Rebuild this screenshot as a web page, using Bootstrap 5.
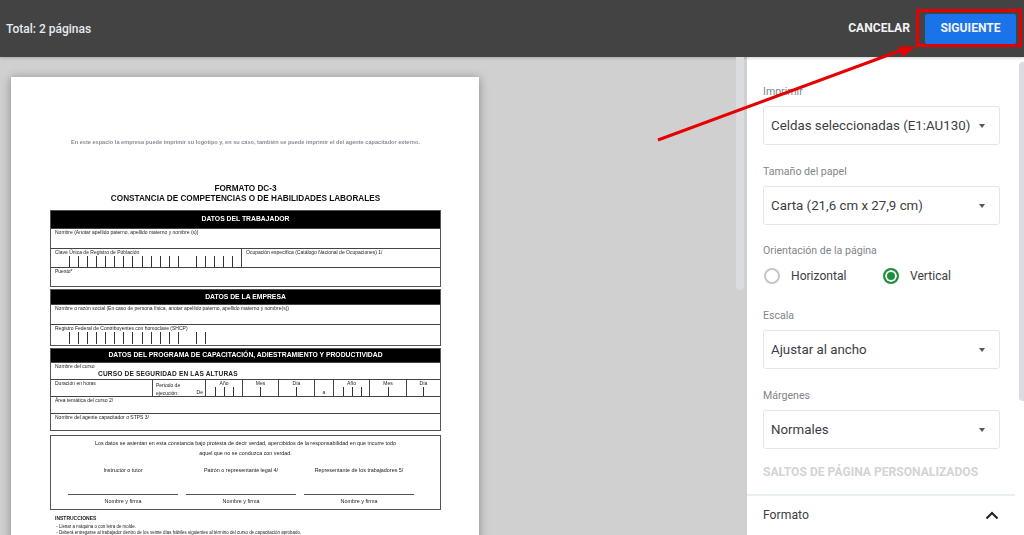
<!DOCTYPE html>
<html lang="es">
<head>
  <meta charset="UTF-8">
  <meta name="viewport" content="width=device-width, initial-scale=1.0">
  <title>Imprimir</title>
  <link href="https://cdn.jsdelivr.net/npm/bootstrap@5.3.0/dist/css/bootstrap.min.css" rel="stylesheet">
  <style>
    html, body { height: 535px; overflow: hidden; }
    body { font-family: Roboto, "Liberation Sans", sans-serif; background: #d0d0d0; position: relative; }
    /* top bar */
    .print-bar { height: 57px; background: #434343; padding: 0 8px 0 6px; box-shadow: 0 1px 3px rgba(0,0,0,.2); position: relative; }
    .print-total { font-size: 12px; font-weight: 500; color: #e8eaed; }
    .btn-cancel { font-size: 12.1px; font-weight: 700; color: #f1f3f4; padding: 0; margin-right: 15px; border: 0; }
    .btn-next { font-size: 12.1px; font-weight: 700; width: 91px; height: 30px; padding: 0; background: #1a73e8; border: 0; border-radius: 2px; color: #f1f3f4; }
    .print-body { height: 478px; }
    /* sheet preview */
    .preview-area { width: 747px; padding: 20px 0 0 11px; }
    .sheet { width: 468px; height: 480px; background: #fff; box-shadow: 0 1px 9px rgba(0,0,0,.35); font-family: "Liberation Sans", Arial, sans-serif; color: #222; padding: 62px 38px 0 39px; overflow: hidden; }
    .sheet-inner { filter: blur(.3px); }
    .logo-note { font-size: 5.6px; font-weight: 700; color: #8b8b9a; text-align: center; height: 45px; line-height: 7px; white-space: nowrap; }
    .doc-title { font-size: 8.2px; font-weight: 700; line-height: 10px; text-align: center; color: #111; height: 26px; white-space: nowrap; }
    .dc-block { border: 1px solid #555; margin-bottom: 2px; }
    .dc-head { background: #000; color: #fff; font-size: 6.8px; font-weight: 700; text-align: center; display: flex; align-items: center; justify-content: center; white-space: nowrap; }
    .dc-row { border-top: 1px solid #444; font-size: 5px; line-height: 6px; overflow: hidden; white-space: nowrap; }
    .dc-cell { padding: 0 4px; }
    .h-13 { height: 13px; } .h-14 { height: 14px; } .h-17 { height: 17px; } .h-18 { height: 18px; }
    .h-19 { height: 19px; } .h-20 { height: 20px; } .h-21 { height: 21px; }
    .tick-run { height: 12px; background: repeating-linear-gradient(90deg, #333 0 1px, transparent 1px 9.07px); }
    .ticks-wrap { margin: 1px 0 0 14px; gap: 9px; }
    .course-name { font-size: 6.6px; font-weight: 700; padding-left: 43px; line-height: 7px; margin-top: 1px; white-space: nowrap; letter-spacing: .15px; }
    .side-rule { border-left: 1px solid #444; }
    .date-ticks { height: 9px; margin-top: 1px; }
    .date-ticks.years { width: 19px; margin-left: 9px; }
    .date-ticks.single { width: 1px; margin-left: auto; margin-right: auto; }
    .sign-box { height: 75px; border: 1px solid #555; font-size: 5.4px; text-align: center; padding-top: 3px; margin-top: 4px; }
    .sign-box p { margin: 0; line-height: 9.5px; white-space: nowrap; }
    .sign-line { border-top: 1px solid #555; width: 110px; margin-top: 20px; padding-top: 2px; }
    .sign-role { width: 110px; white-space: nowrap; }
    .sign-roles { margin-top: 8px; padding: 0 17px; gap: 8px; }
    .sign-lines { padding: 0 17px; gap: 8px; }
    .instr { font-size: 4.45px; line-height: 6.5px; padding: 5px 0 0 5px; }
    .instr div { white-space: nowrap; }
    .instr-title { margin-bottom: 2px; font-size: 5px; }
    /* settings panel */
    .settings { width: 277px; background: #fff; padding: 27px 0 0 16px; color: #3c4043; }
    .opt-label { font-size: 10.6px; line-height: 14px; color: #80868b; padding-top: 1px; margin-bottom: 7px; }
    .opt-select { width: 237px; height: 39px; border: 1px solid #e3e5e8; border-radius: 3px; padding: 0 14px 0 7px; font-size: 13.3px; margin-bottom: 19px; }
    .caret { width: 0; height: 0; border-left: 3.5px solid transparent; border-right: 3.5px solid transparent; border-top: 4px solid #555; }
    .orient-label { padding-top: 0; }
    .opt-radio-row { height: 22px; font-size: 12.1px; margin-bottom: 21px; padding-left: 1px; }
    .radio-dot { width: 16px; height: 16px; border-radius: 50%; border: 2px solid #c4c7c5; margin-right: 11px; display: inline-block; }
    .radio-dot.on { border-color: #1e8e3e; box-shadow: inset 0 0 0 2px #fff; background: #1e8e3e; margin-right: 11px; }
    .radio-item { width: 119px; }
    .page-breaks { font-size: 12.1px; font-weight: 700; color: #d2d4d6; margin-top: -3px; height: 29px; line-height: 14px; white-space: nowrap; }
    .format-row { margin-left: -16px; margin-right: 9px; border-top: 2px solid #eceff1; height: 40px; padding: 0 16px 0 16px; font-size: 12.2px; }
    /* overlays */
    .scroll-a { position: absolute; left: 736px; top: 57px; width: 8px; height: 233px; background: #dadce0; border-radius: 0 0 4px 4px; }
    .scroll-b { position: absolute; left: 1019px; top: 62px; width: 5px; height: 339px; background: #dadce0; border-radius: 4px 0 0 4px; }
    .red-box { position: absolute; left: 916px; top: 9px; width: 106px; height: 38px; border: 3px solid #e60000; }
    .red-arrow { position: absolute; left: 650px; top: 40px; }
  </style>
</head>
<body>
  <div class="print-bar d-flex align-items-center justify-content-between">
    <span class="print-total">Total: 2 páginas</span>
    <div class="d-flex align-items-center">
      <button class="btn btn-cancel" type="button">CANCELAR</button>
      <button class="btn btn-next" type="button">SIGUIENTE</button>
    </div>
  </div>

  <div class="print-body d-flex">
    <div class="preview-area">
      <div class="sheet">
        <div class="sheet-inner">
          <div class="logo-note">En este espacio la empresa puede imprimir su logotipo y, en su caso, también se puede imprimir el del agente capacitador externo.</div>
          <div class="doc-title">FORMATO DC-3<br>CONSTANCIA DE COMPETENCIAS O DE HABILIDADES LABORALES</div>

          <div class="dc-block">
            <div class="dc-head h-17">DATOS DEL TRABAJADOR</div>
            <div class="dc-row dc-cell h-20">Nombre (Anotar apellido paterno, apellido materno y nombre (s))</div>
            <div class="dc-row d-flex h-19">
              <div class="dc-cell" style="width:190px">Clave Única de Registro de Población
                <div class="ticks-wrap d-flex"><div class="tick-run" style="width:118px"></div><div class="tick-run" style="width:37px"></div></div>
              </div>
              <div class="dc-cell side-rule">Ocupación específica (Catálogo Nacional de Ocupaciones) 1/</div>
            </div>
            <div class="dc-row dc-cell h-19">Puesto*</div>
          </div>

          <div class="dc-block">
            <div class="dc-head h-14">DATOS DE LA EMPRESA</div>
            <div class="dc-row dc-cell h-20">Nombre o razón social (En caso de persona física, anotar apellido paterno, apellido materno y nombre(s))</div>
            <div class="dc-row dc-cell h-21">Registro Federal de Contribuyentes con homoclave (SHCP)
              <div class="ticks-wrap d-flex"><div class="tick-run" style="width:118px"></div><div class="tick-run" style="width:10px"></div></div>
            </div>
          </div>

          <div class="dc-block">
            <div class="dc-head h-13">DATOS DEL PROGRAMA DE CAPACITACIÓN, ADIESTRAMIENTO Y PRODUCTIVIDAD</div>
            <div class="dc-row dc-cell h-17">Nombre del curso
              <div class="course-name">CURSO DE SEGURIDAD EN LAS ALTURAS</div>
            </div>
            <div class="dc-row d-flex h-17">
              <div class="dc-cell" style="width:101px">Duración en horas</div>
              <div class="side-rule d-flex justify-content-between" style="width:53px;padding:2px 2px 0 3px;line-height:7.5px"><span>Periodo de<br>ejecución:</span><span class="align-self-end">De</span></div>
              <div class="side-rule text-center" style="width:37px">Año<div class="tick-run date-ticks years"></div></div>
              <div class="side-rule text-center" style="width:36px">Mes<div class="tick-run date-ticks single"></div></div>
              <div class="side-rule text-center" style="width:36px">Día<div class="tick-run date-ticks single"></div></div>
              <div class="side-rule text-center" style="width:19px;padding-top:9px">a</div>
              <div class="side-rule text-center" style="width:36px">Año<div class="tick-run date-ticks years"></div></div>
              <div class="side-rule text-center" style="width:37px">Mes<div class="tick-run date-ticks single"></div></div>
              <div class="side-rule text-center flex-grow-1">Día<div class="tick-run date-ticks single"></div></div>
            </div>
            <div class="dc-row dc-cell h-17">Área temática del curso 2/</div>
            <div class="dc-row dc-cell h-17">Nombre del agente capacitador o STPS 3/</div>
          </div>

          <div class="sign-box">
            <p>Los datos se asientan en esta constancia bajo protesta de decir verdad, apercibidos de la responsabilidad en que incurre todo</p>
            <p>aquel que no se conduzca con verdad.</p>
            <div class="sign-roles d-flex"><div class="sign-role">Instructor o tutor</div><div class="sign-role">Patrón o representante legal 4/</div><div class="sign-role">Representante de los trabajadores 5/</div></div>
            <div class="sign-lines d-flex"><div class="sign-line">Nombre y firma</div><div class="sign-line">Nombre y firma</div><div class="sign-line">Nombre y firma</div></div>
          </div>

          <div class="instr">
            <div class="fw-bold instr-title">INSTRUCCIONES</div>
            <div>&nbsp;- Llenar a máquina o con letra de molde.</div>
            <div>&nbsp;- Deberá entregarse al trabajador dentro de los veinte días hábiles siguientes al término del curso de capacitación aprobado.</div>
          </div>
        </div>
      </div>
    </div>

    <div class="settings">
      <div class="opt-label">Imprimir</div>
      <div class="opt-select d-flex align-items-center justify-content-between"><span>Celdas seleccionadas (E1:AU130)</span><span class="caret"></span></div>
      <div class="opt-label">Tamaño del papel</div>
      <div class="opt-select d-flex align-items-center justify-content-between"><span>Carta (21,6 cm x 27,9 cm)</span><span class="caret"></span></div>
      <div class="opt-label orient-label">Orientación de la página</div>
      <div class="opt-radio-row d-flex align-items-center">
        <div class="radio-item d-flex align-items-center"><span class="radio-dot"></span>Horizontal</div>
        <div class="d-flex align-items-center"><span class="radio-dot on"></span>Vertical</div>
      </div>
      <div class="opt-label">Escala</div>
      <div class="opt-select d-flex align-items-center justify-content-between"><span>Ajustar al ancho</span><span class="caret"></span></div>
      <div class="opt-label">Márgenes</div>
      <div class="opt-select d-flex align-items-center justify-content-between"><span>Normales</span><span class="caret"></span></div>
      <div class="page-breaks">SALTOS DE PÁGINA PERSONALIZADOS</div>
      <div class="format-row d-flex align-items-center justify-content-between">
        <span>Formato</span>
        <svg width="14" height="9" viewBox="0 0 14 9"><path d="M1.5 7.5 7 2l5.500 5.500" fill="none" stroke="#202124" stroke-width="2"/></svg>
      </div>
    </div>
  </div>

  <div class="scroll-a"></div>
  <div class="scroll-b"></div>
  <div class="red-box"></div>
  <svg class="red-arrow" width="270" height="110" viewBox="0 0 270 110">
    <path d="M8 100 252 10" stroke="#e60000" stroke-width="3" fill="none"/>
    <path d="M266 6.500 248 6.500 253 17z" fill="#e60000"/>
  </svg>
</body>
</html>
